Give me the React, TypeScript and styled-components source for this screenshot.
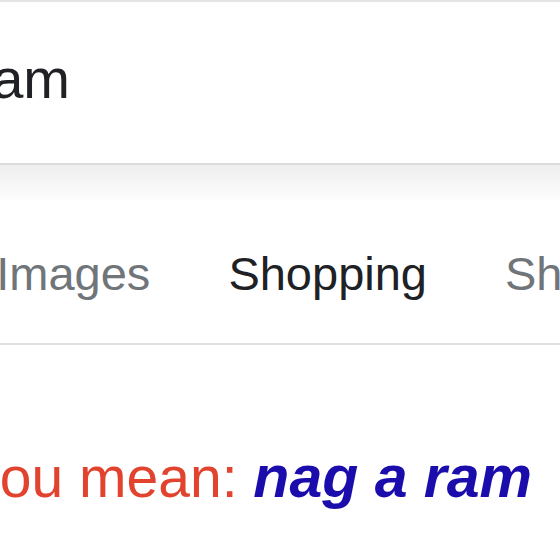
import React from "react";
import styled, { createGlobalStyle } from "styled-components";

const Global = createGlobalStyle`
  html, body { margin: 0; padding: 0; background: #fff; }
  body { font-family: "Liberation Sans", Arial, sans-serif; }
`;

const Page = styled.div`
  width: 560px;
  height: 560px;
  overflow: hidden;
  background: #fff;
  display: flex;
  flex-direction: column;
`;

const SearchBar = styled.div`
  border-top: 2px solid #e4e4e4;
  border-bottom: 2px solid #dcdcdc;
  height: 112px;
  padding-top: 49px;
  flex-shrink: 0;
  display: flex;
`;

const Query = styled.span`
  font-size: 56px;
  line-height: 56px;
  height: 56px;
  color: #202124;
  margin-left: -151px;
  white-space: nowrap;
`;

const Shade = styled.div`
  height: 35px;
  flex-shrink: 0;
  background: linear-gradient(#eeeeee, #fdfdfd);
`;

const Tabs = styled.nav`
  display: flex;
  gap: 78px;
  height: 93px;
  padding-top: 50px;
  border-bottom: 2px solid #e0e0e0;
  margin-left: -134px;
  flex-shrink: 0;
  white-space: nowrap;
`;

const Tab = styled.span<{ $active?: boolean }>`
  font-size: 47px;
  line-height: 47px;
  height: 47px;
  color: ${(p) => (p.$active ? "#202124" : "#70757a")};
`;

const Suggestion = styled.p`
  margin: 104px 0 0 -130px;
  font-size: 57px;
  line-height: 57px;
  white-space: nowrap;
  color: #e2432f;
`;

const Correction = styled.a`
  color: #1a0dab;
  font-size: 59px;
  font-weight: bold;
  font-style: italic;
  text-decoration: none;
`;

export default function App() {
  return (
    <>
      <Global />
      <Page>
        <SearchBar>
          <Query>anagram</Query>
        </SearchBar>
        <Shade />
        <Tabs>
          <Tab>All</Tab>
          <Tab>Images</Tab>
          <Tab $active>Shopping</Tab>
          <Tab>Short videos</Tab>
        </Tabs>
        <Suggestion>
          Did you mean: <Correction href="#">nag a ram</Correction>
        </Suggestion>
      </Page>
    </>
  );
}
